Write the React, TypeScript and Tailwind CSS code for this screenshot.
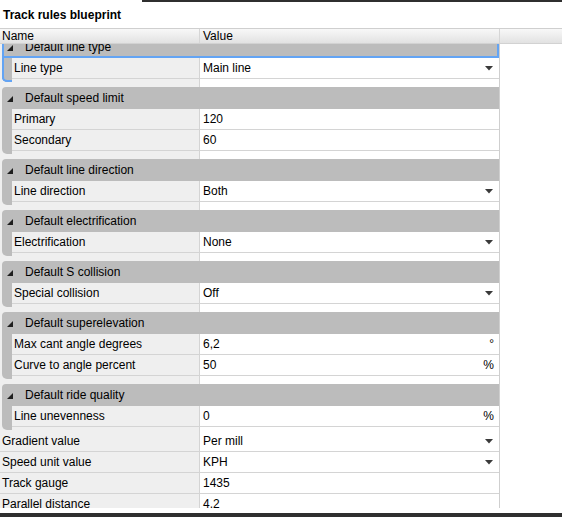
import React from 'react';

type Row = { name: string; value: string; dropdown?: boolean; unit?: string };
type Group = { title: string; rows: Row[]; selected?: boolean };

const GROUPS: Group[] = [
  { title: 'Default line type', selected: true, rows: [{ name: 'Line type', value: 'Main line', dropdown: true }] },
  {
    title: 'Default speed limit',
    rows: [
      { name: 'Primary', value: '120' },
      { name: 'Secondary', value: '60' },
    ],
  },
  { title: 'Default line direction', rows: [{ name: 'Line direction', value: 'Both', dropdown: true }] },
  { title: 'Default electrification', rows: [{ name: 'Electrification', value: 'None', dropdown: true }] },
  { title: 'Default S collision', rows: [{ name: 'Special collision', value: 'Off', dropdown: true }] },
  {
    title: 'Default superelevation',
    rows: [
      { name: 'Max cant angle degrees', value: '6,2', unit: '°' },
      { name: 'Curve to angle percent', value: '50', unit: '%' },
    ],
  },
  { title: 'Default ride quality', rows: [{ name: 'Line unevenness', value: '0', unit: '%' }] },
];

const LOOSE_ROWS: Row[] = [
  { name: 'Gradient value', value: 'Per mill', dropdown: true },
  { name: 'Speed unit value', value: 'KPH', dropdown: true },
  { name: 'Track gauge', value: '1435' },
  { name: 'Parallel distance', value: '4,2' },
];

const Arrow = () => (
  <svg width="8" height="5" viewBox="0 0 8 5" className="mr-[6px] shrink-0">
    <polygon points="0,0 8,0 4,4.5" fill="#3a3a3a" />
  </svg>
);

const Expanded = () => (
  <svg width="6" height="6" viewBox="0 0 6 6" className="ml-[5px] mr-[12px] mt-[2px] shrink-0">
    <polygon points="6,0 6,6 0,6" fill="#1e1e1e" />
  </svg>
);

const ValueCell = ({ row }: { row: Row }) => (
  <div className="flex-1 flex items-center bg-white pl-[3px]">
    <span className="flex-1">{row.value}</span>
    {row.dropdown && <Arrow />}
    {row.unit && <span className="mr-[5px]">{row.unit}</span>}
  </div>
);

const GroupBlock = ({ group, last }: { group: Group; last: boolean }) => (
  <div className="bg-[#efefef] pl-[2px]">
    <div
      className={
        'h-[22px] flex items-center bg-[#bcbcbc] rounded-tl-[4px] ' +
        (group.selected
          ? 'shadow-[inset_2px_0_0_#63a4f4,inset_-2px_0_0_#63a4f4,inset_0_-2px_0_#63a4f4]'
          : '')
      }
    >
      <Expanded />
      <span>{group.title}</span>
    </div>
    <div className="flex">
      <div
        className={
          'w-[10px] -mb-[3px] bg-[#bcbcbc] rounded-bl-[5px] relative z-10 ' +
          (group.selected ? 'shadow-[inset_2px_0_0_#63a4f4,inset_0_-2px_0_#63a4f4]' : '')
        }
      />
      <div className="flex-1">
        {group.rows.map((row) => (
          <div key={row.name} className="h-[21px] flex border-b border-[#d4d4d4]">
            <div className="w-[188px] flex items-center pl-[2px] bg-[#efefef] border-r border-[#d4d4d4]">
              {row.name}
            </div>
            <ValueCell row={row} />
          </div>
        ))}
      </div>
    </div>
    <div className={(last ? 'h-[4px]' : 'h-[8px]') + ' flex -ml-[2px]'}>
      <div className="w-[200px] bg-[#efefef] border-r border-[#d4d4d4]" />
      <div className="flex-1 bg-white" />
    </div>
  </div>
);

const App: React.FC = () => {
  return (
    <div className="w-[562px] h-[517px] bg-white flex flex-col overflow-hidden text-[12px] leading-none text-black font-['Liberation_Sans',Arial,sans-serif]">
      <div className="h-[2px] flex shrink-0">
        <div className="w-[142px] bg-white" />
        <div className="flex-1 bg-[#2f2f2f]" />
      </div>
      <div className="h-[27px] shrink-0 flex items-center pl-[3px] font-bold border-b border-[#cfcfcf]">
        Track rules blueprint
      </div>
      <div className="h-[15px] shrink-0 flex bg-gradient-to-b from-[#f8f8f8] to-[#e2e2e2] border-b border-[#d2d2d2] relative z-20">
        <div className="w-[200px] flex items-center pl-[2px] border-r border-[#d6d6d6]">Name</div>
        <div className="w-[300px] flex items-center pl-[3px] border-r border-[#d6d6d6]">Value</div>
        <div className="flex-1" />
      </div>
      <div className="h-[464px] shrink-0 flex overflow-hidden">
        <div className="w-[500px] border-r border-[#cfcfcf]">
          <div className="-mt-[8px]">
            {GROUPS.map((g, i) => (
              <GroupBlock key={g.title} group={g} last={i === GROUPS.length - 1} />
            ))}
            {LOOSE_ROWS.map((row) => (
              <div key={row.name} className="h-[21px] flex border-b border-[#d4d4d4]">
                <div className="w-[200px] flex items-center pl-[2px] bg-[#efefef] border-r border-[#d4d4d4]">
                  {row.name}
                </div>
                <ValueCell row={row} />
              </div>
            ))}
          </div>
        </div>
        <div className="flex-1 bg-white" />
      </div>
      <div className="h-[5px] shrink-0 bg-white" />
      <div className="h-[4px] shrink-0 bg-[#2f2f2f]" />
    </div>
  );
};

export default App;
